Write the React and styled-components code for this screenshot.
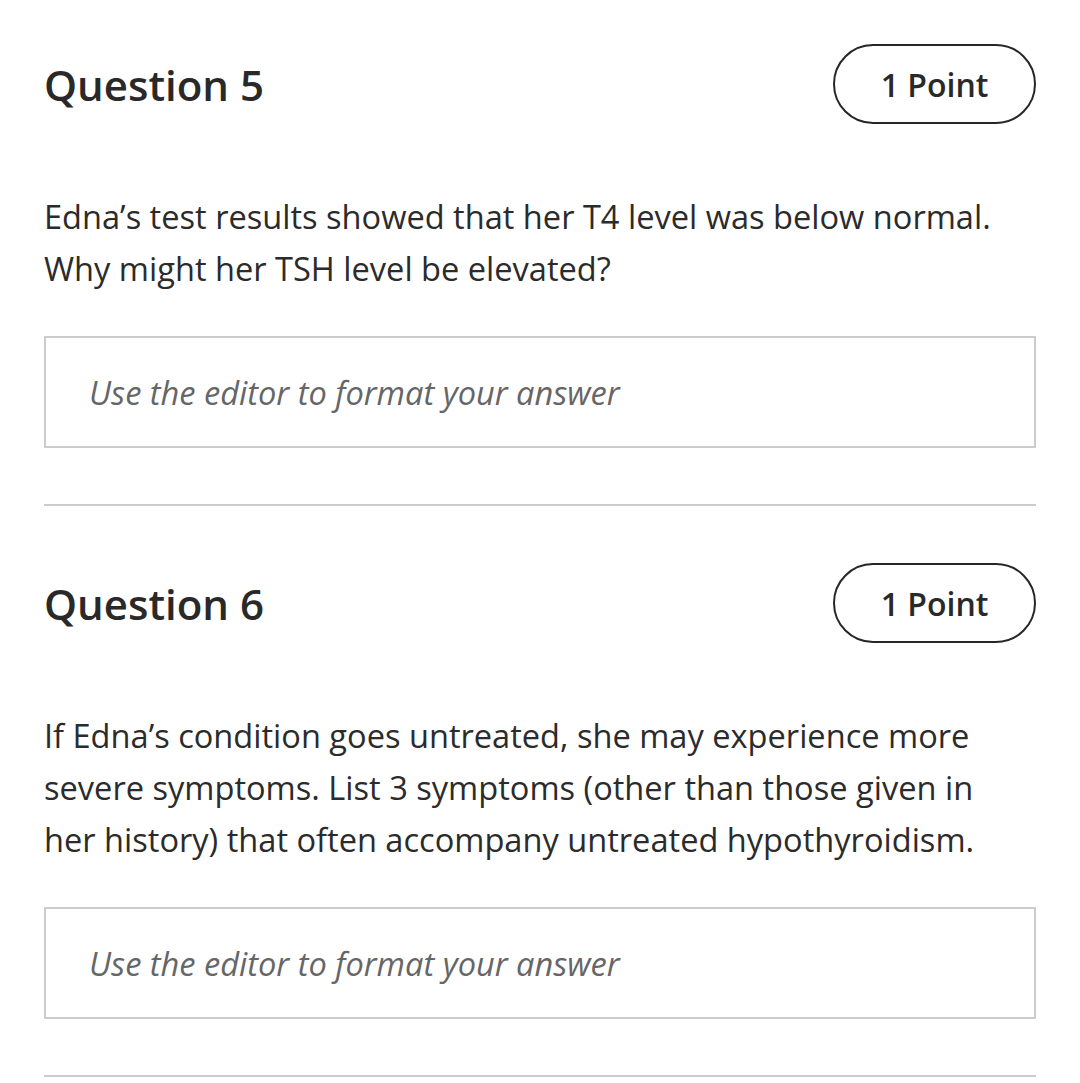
import React from 'react';
import styled, { createGlobalStyle } from 'styled-components';

const GlobalStyle = createGlobalStyle`
  * { box-sizing: border-box; }
  body {
    margin: 0;
    background: #fff;
    font-family: "Open Sans", "Liberation Sans", sans-serif;
    color: #2b2b2b;
  }
`;

const Page = styled.div`
  padding: 44px 44px 0;
`;

const QuestionBlock = styled.section`
  padding-bottom: 56px;
  margin-bottom: 57px;
  border-bottom: 2px solid #cccccc;
`;

const Header = styled.div`
  display: flex;
  justify-content: space-between;
  align-items: center;
  height: 80px;
`;

const Title = styled.h2`
  margin: 0;
  font-size: 42px;
  font-weight: 600;
  color: #292929;
`;

const Points = styled.div`
  width: 203px;
  height: 80px;
  border: 2px solid #262626;
  border-radius: 40px;
  display: flex;
  align-items: center;
  justify-content: center;
  font-size: 32px;
  font-weight: 600;
  color: #292929;
`;

const Prompt = styled.p`
  margin: 67px 0 41px;
  padding-right: 24px;
  font-size: 32.6px;
  line-height: 52px;
  color: #2b2b2b;
`;

const AnswerBox = styled.div`
  height: 112px;
  border: 2px solid #cccccc;
  padding: 0 43px;
  display: flex;
  align-items: center;
  font-size: 32.6px;
  font-style: italic;
  color: #666;
`;

const questions = [
  {
    n: 5,
    text: 'Edna’s test results showed that her T4 level was below normal. Why might her TSH level be elevated?',
  },
  {
    n: 6,
    text: 'If Edna’s condition goes untreated, she may experience more severe symptoms. List 3 symptoms (other than those given in her history) that often accompany untreated hypothyroidism.',
  },
];

const App = () => (
  <>
    <GlobalStyle />
    <Page>
      {questions.map((q) => (
        <QuestionBlock key={q.n}>
          <Header>
            <Title>Question {q.n}</Title>
            <Points>1 Point</Points>
          </Header>
          <Prompt>{q.text}</Prompt>
          <AnswerBox>Use the editor to format your answer</AnswerBox>
        </QuestionBlock>
      ))}
    </Page>
  </>
);

export default App;
